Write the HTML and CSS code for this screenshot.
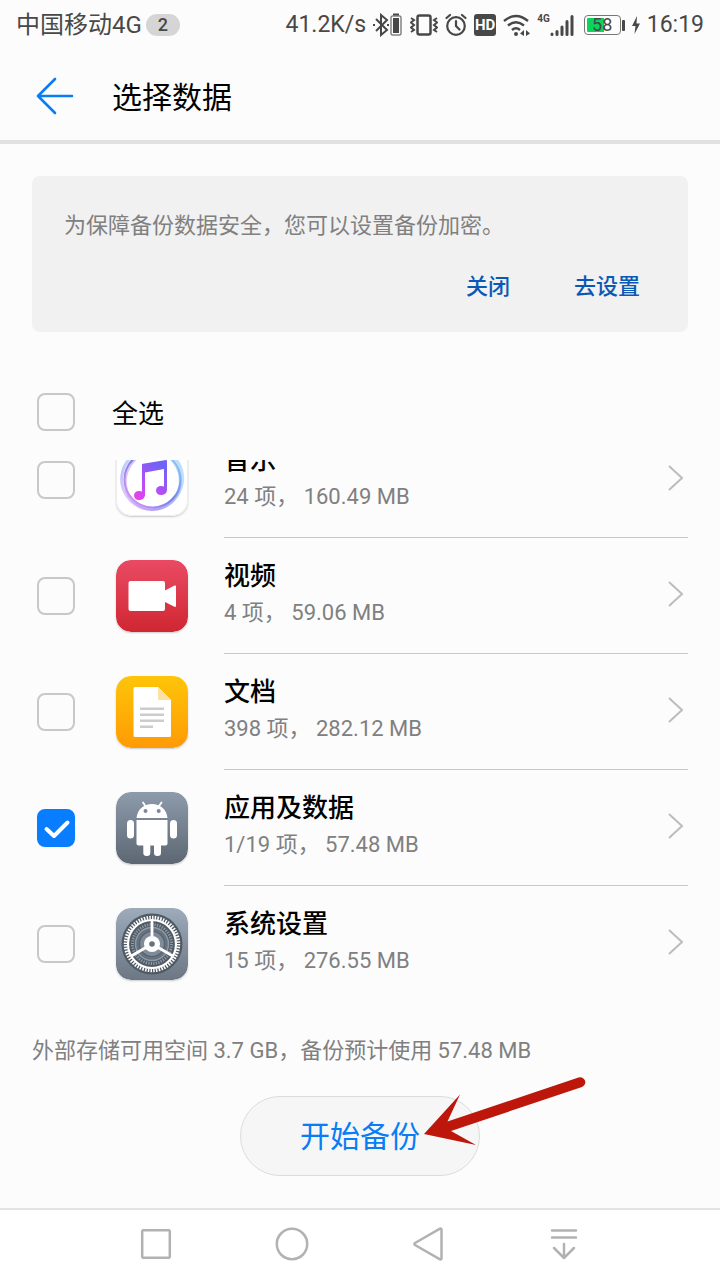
FILE: index.html
```html
<!DOCTYPE html>
<html lang="zh-CN">
<head>
<meta charset="utf-8">
<meta name="viewport" content="width=device-width, initial-scale=1">
<title>选择数据</title>
<link rel="stylesheet" href="styles.css">
</head>
<body>
<div class="screen">
  <div class="status">
    <span class="carrier">中国移动4G</span>
    <span class="badge">2</span>
    <div class="indicators">
      <span>41.2K/s</span>
      <svg width="30" height="24" viewBox="0 0 30 24" fill="none" stroke="#484848" stroke-width="2" aria-hidden="true">
        <path d="M3 6l11 11-6 5V2l6 5L3 18"/><path d="M0 12h2M14 12h2"/>
        <rect x="18" y="3" width="10" height="19" rx="1" stroke-width="1"/><path d="M20 1.500h6"/><path d="M20 5h6v15h-6z" fill="#484848" stroke="none"/>
      </svg>
      <svg width="28" height="24" viewBox="0 0 28 24" fill="none" stroke="#484848" stroke-width="2" aria-hidden="true">
        <rect x="7.500" y="2.500" width="13" height="19" rx="2" stroke-width="2.500"/>
        <path d="M1 5l3 2-3 2.500 3 2.500-3 2.500 3 2.500-3 2M27 5l-3 2 3 2.500-3 2.500 3 2.500-3 2.500 3 2"/>
      </svg>
      <svg width="22" height="24" viewBox="0 0 22 24" fill="none" stroke="#484848" stroke-width="2.200" stroke-linecap="round" aria-hidden="true">
        <circle cx="11" cy="13" r="8.800"/><path d="M11 8v5l3.500 3.500M1.500 5L5 2M20.500 5L17 2"/>
      </svg>
      <span class="hd">HD</span>
      <svg width="27" height="24" viewBox="0 0 27 24" fill="none" stroke="#484848" stroke-width="2.400" aria-hidden="true">
        <path d="M1 8Q13 -2 25 8M5 12.500Q13 6 21 12.500M9 17Q13 13.500 17 17"/>
        <circle cx="13" cy="21" r="2" fill="#484848" stroke="none"/><path d="M17 20.500l4-3.500v6zM27 20.500l-4-3.500v6z" fill="#484848" stroke="none"/>
      </svg>
      <span class="cell">
        <span class="cell-type">4G</span>
        <svg width="24" height="24" viewBox="0 0 24 24" fill="none" stroke="#484848" stroke-width="3" stroke-linecap="round" aria-hidden="true">
          <path d="M2 21v.5M7 18.500v3M12 14v7.500M17 8.500v13M22 3.500v18"/>
        </svg>
      </span>
      <span class="battery">58</span>
      <svg width="8" height="24" viewBox="0 0 8 24" fill="#484848" aria-hidden="true"><path d="M5 3L0 13h3.500L2.500 21 8 10.500H4.500z"/></svg>
      <time>16:19</time>
    </div>
  </div>

  <header class="header">
    <button class="back" type="button" aria-label="返回">
      <svg width="38" height="38" viewBox="0 0 38 38" fill="none" stroke="#087df5" stroke-width="2.600" stroke-linecap="round" stroke-linejoin="round"><path d="M36 19H2M19 2L2 19l17 17"/></svg>
    </button>
    <h1>选择数据</h1>
  </header>

  <main class="main">
    <section class="notice">
      <p>为保障备份数据安全，您可以设置备份加密。</p>
      <div class="notice-actions">
        <button type="button">关闭</button>
        <button type="button">去设置</button>
      </div>
    </section>

    <div class="all">
      <input class="check" type="checkbox" id="all">
      <label for="all">全选</label>
    </div>

    <ul class="list">
      <li class="row">
        <input class="check" type="checkbox" id="music">
        <svg class="icon" viewBox="0 0 72 72" aria-hidden="true">
          <defs>
            <linearGradient id="ring" x1="0" y1="1" x2="1" y2="0"><stop offset="0" stop-color="#e89cf5"/><stop offset=".5" stop-color="#777cf0"/><stop offset="1" stop-color="#86e0fb"/></linearGradient>
            <linearGradient id="note" x1="0" y1="1" x2=".6" y2="0"><stop offset="0" stop-color="#f23cf0"/><stop offset="1" stop-color="#6f63f7"/></linearGradient>
          </defs>
          <rect x=".5" y=".5" width="71" height="71" rx="15" fill="#fff" stroke="#ececec"/>
          <g fill="none" stroke="url(#ring)">
            <ellipse cx="35" cy="36" rx="29" ry="30" stroke-width="3" opacity=".45" transform="rotate(-35 35 36)"/>
            <ellipse cx="38" cy="36" rx="28" ry="30" stroke-width="3" opacity=".5" transform="rotate(35 38 36)"/>
            <circle cx="36.500" cy="35.500" r="28" stroke-width="2"/>
          </g>
          <path d="M26 20.500Q26 20 27 19.800L50 16q1 0 1 1v29c0 3-3 5-6 5s-5-2-5-4.500 2-4.500 5-4.500l3 .5V25L29 28.500V51c0 3-3 5-6 5s-5-2-5-4.500 2-4.500 5-4.500l3 .5z" fill="url(#note)"/>
        </svg>
        <div class="body">
          <div class="text"><label for="music">音乐</label><p>24 项， 160.49 MB</p></div>
          <button class="more" type="button" aria-label="音乐详情"><svg width="18" height="28" viewBox="0 0 18 28"><path d="M2 2l13 12L2 26"/></svg></button>
        </div>
      </li>
      <li class="row">
        <input class="check" type="checkbox" id="video">
        <svg class="icon" viewBox="0 0 72 72" aria-hidden="true">
          <defs><linearGradient id="red" x2="0" y2="1"><stop stop-color="#e94b63"/><stop offset="1" stop-color="#d02632"/></linearGradient></defs>
          <rect width="72" height="72" rx="15" fill="url(#red)"/>
          <rect x="12.500" y="21" width="36.500" height="30" rx="2" fill="#fff"/>
          <path d="M48 31l10.500-5.500Q60 25 60 26.500v19q0 2-1.500 1.300L48 41.500z" fill="#fff"/>
        </svg>
        <div class="body">
          <div class="text"><label for="video">视频</label><p>4 项， 59.06 MB</p></div>
          <button class="more" type="button" aria-label="视频详情"><svg width="18" height="28" viewBox="0 0 18 28"><path d="M2 2l13 12L2 26"/></svg></button>
        </div>
      </li>
      <li class="row">
        <input class="check" type="checkbox" id="docs">
        <svg class="icon" viewBox="0 0 72 72" aria-hidden="true">
          <defs><linearGradient id="amber" x2="0" y2="1"><stop stop-color="#fdc508"/><stop offset="1" stop-color="#ff9a06"/></linearGradient></defs>
          <rect width="72" height="72" rx="15" fill="url(#amber)"/>
          <path d="M19 11h23l13 13v35.500q0 1.500-1.500 1.500H19q-1.500 0-1.500-1.500v-47Q17.500 11 19 11z" fill="#fff"/>
          <path d="M42 11l13 13H43.500Q42 24 42 22.500z" fill="#fde0a4"/>
          <path d="M24 32.700h24M24 38.700h24M24 44.700h24M24 50.700h13" stroke="#ccc" stroke-width="2.400"/>
        </svg>
        <div class="body">
          <div class="text"><label for="docs">文档</label><p>398 项， 282.12 MB</p></div>
          <button class="more" type="button" aria-label="文档详情"><svg width="18" height="28" viewBox="0 0 18 28"><path d="M2 2l13 12L2 26"/></svg></button>
        </div>
      </li>
      <li class="row">
        <input class="check" type="checkbox" id="apps" checked>
        <svg class="icon" viewBox="0 0 72 72" aria-hidden="true">
          <defs><linearGradient id="slate" x2="0" y2="1"><stop stop-color="#8d9bab"/><stop offset="1" stop-color="#5d6773"/></linearGradient></defs>
          <rect width="72" height="72" rx="15" fill="url(#slate)"/>
          <g fill="#fff">
            <path d="M20.500 26C21.500 17 28 12 36 12s14.500 5 15.500 14z"/>
            <path d="M20.500 28h31v23.500q0 2-2 2h-27q-2 0-2-2z"/>
            <rect x="11" y="28" width="7" height="18.500" rx="3.500"/><rect x="54" y="28" width="7" height="18.500" rx="3.500"/>
            <rect x="27.300" y="46" width="7" height="18" rx="3.300"/><rect x="38" y="46" width="7" height="18" rx="3.300"/>
          </g>
          <path d="M27 10.500l3.500 5M45.500 10.500l-3.500 5" stroke="#fff" stroke-width="1.800" stroke-linecap="round"/>
          <circle cx="29.500" cy="19" r="2" fill="#7b8896"/><circle cx="42.700" cy="19" r="2" fill="#7b8896"/>
        </svg>
        <div class="body">
          <div class="text"><label for="apps">应用及数据</label><p>1/19 项， 57.48 MB</p></div>
          <button class="more" type="button" aria-label="应用及数据详情"><svg width="18" height="28" viewBox="0 0 18 28"><path d="M2 2l13 12L2 26"/></svg></button>
        </div>
      </li>
      <li class="row">
        <input class="check" type="checkbox" id="system">
        <svg class="icon" viewBox="0 0 72 72" aria-hidden="true">
          <defs><linearGradient id="steel" x2="0" y2="1"><stop stop-color="#9dabbb"/><stop offset="1" stop-color="#6c7684"/></linearGradient></defs>
          <rect width="72" height="72" rx="15" fill="url(#steel)"/>
          <circle cx="36" cy="36" r="30.500" fill="#505a64"/>
          <g fill="none">
            <circle cx="36" cy="36" r="26.500" stroke="#fff" stroke-width="3.500" pathLength="120" stroke-dasharray="1.100 .9"/>
            <circle cx="36" cy="36" r="24" stroke="#fff" stroke-width="2.200"/>
            <circle cx="36" cy="36" r="19.500" stroke="#8e9aa7" stroke-width="3" pathLength="96" stroke-dasharray="1 1"/>
            <circle cx="36" cy="36" r="16.500" fill="#67727f" stroke="#8e9aa7" stroke-width="1.500"/>
            <circle cx="36" cy="36" r="12.500" fill="#7f8b99" stroke="#55606b" stroke-width="1.200"/>
            <path d="M36 36V12M36 36l20.800 12M36 36L15.200 48" stroke="#fff" stroke-width="2.800"/>
          </g>
          <circle cx="36" cy="36" r="8" fill="#fff"/><circle cx="36" cy="36" r="2.800" fill="#67727f"/>
        </svg>
        <div class="body">
          <div class="text"><label for="system">系统设置</label><p>15 项， 276.55 MB</p></div>
          <button class="more" type="button" aria-label="系统设置详情"><svg width="18" height="28" viewBox="0 0 18 28"><path d="M2 2l13 12L2 26"/></svg></button>
        </div>
      </li>
    </ul>

    <p class="storage">外部存储可用空间 3.7 GB，备份预计使用 57.48 MB</p>
    <div class="action">
      <button class="start" type="button">开始备份</button>
      <svg class="pointer" width="162" height="70" viewBox="0 0 162 70" fill="#bd170b" aria-hidden="true"><path d="M0 58L36 18.500 23.500 45.500 154.500 1.500a5 5 0 0 1 3.500 9.500L27 55l25 14z"/></svg>
    </div>
  </main>

  <nav class="nav">
    <button type="button" aria-label="最近任务"><svg width="36" height="36" viewBox="0 0 36 36"><rect x="4.200" y="4.200" width="27.600" height="27.600" rx="1"/></svg></button>
    <button type="button" aria-label="主屏幕"><svg width="36" height="36" viewBox="0 0 36 36"><circle cx="18" cy="18" r="15.200"/></svg></button>
    <button type="button" aria-label="返回上一页"><svg width="36" height="36" viewBox="0 0 36 36"><path d="M31.500 3.500v29q-.5 1.500-1.500.8L5 19q-1.200-1 0-2L30 2.700q1-.6 1.500.8z"/></svg></button>
    <button type="button" aria-label="下拉通知"><svg width="36" height="36" viewBox="0 0 36 36"><path d="M6 4.500h24M6 11.500h24M18 18v14M8 22l10 10 10-10"/></svg></button>
  </nav>
</div>
</body>
</html>
```
FILE: styles.css
```css
* { box-sizing: border-box; }
body, h1, p, ul { margin: 0; padding: 0; }
body {
  background: #fcfcfc;
  color: #000;
  font-family: Roboto, "Noto Sans CJK SC", sans-serif;
}
button {
  margin: 0;
  padding: 0;
  border: 0;
  background: none;
  font: inherit;
  color: inherit;
  cursor: pointer;
}
svg { display: block; flex: none; }

.screen { display: flex; flex-direction: column; height: 100vh; }

.status {
  display: flex;
  align-items: center;
  height: 50px;
  padding: 0 16px;
  font-size: 24px;
  line-height: 32px;
  color: #484848;
}
.badge {
  width: 34px;
  margin-left: 4px;
  border-radius: 12px;
  background: #d5d5d5;
  font-size: 18px;
  font-weight: 500;
  line-height: 22px;
  text-align: center;
}
.indicators { display: flex; align-items: center; gap: 7px; margin-left: auto; font-size: 23px; }
.hd {
  width: 22px;
  border-radius: 3px;
  background: #484848;
  color: #fff;
  font-size: 15px;
  font-weight: 700;
  line-height: 22px;
  text-align: center;
}
.cell { display: flex; align-items: flex-start; }
.cell-type { font-size: 10px; font-weight: 700; line-height: 12px; }
.battery {
  position: relative;
  width: 37px;
  margin: 0 4px 0 3px;
  border: 1px solid #777;
  border-radius: 4px;
  background: linear-gradient(90deg, #0bd35c 54%, #fff 54%) content-box;
  padding: 2px;
  font-size: 18px;
  line-height: 14px;
  text-align: center;
}
.battery::after {
  content: "";
  position: absolute;
  right: -5px;
  top: 4px;
  width: 3px;
  height: 11px;
  border-radius: 1px;
  background: #484848;
}

.header {
  display: flex;
  align-items: center;
  gap: 38px;
  height: 94px;
  padding: 2px 36px 0;
  border-bottom: 4px solid #e1e1e1;
}
.header h1 { padding-top: 4px; font-size: 30px; font-weight: 400; line-height: 44px; }

.main { display: flex; flex: 1; flex-direction: column; min-height: 0; padding: 32px; }
.notice {
  padding: 34px 48px 28px 32px;
  border-radius: 8px;
  background: #f1f1f1;
  font-size: 22px;
  line-height: 32px;
  color: #808080;
}
.notice-actions {
  display: flex;
  justify-content: flex-end;
  gap: 64px;
  margin-top: 28px;
  color: #0a59b5;
  font-weight: 500;
}
.notice-actions button { height: 34px; line-height: 32px; }

.all {
  display: flex;
  align-items: center;
  gap: 37px;
  height: 96px;
  margin-top: 32px;
  padding-left: 5px;
  font-size: 26px;
  line-height: 36px;
}
.all label { padding-top: 4px; }
.check {
  flex: none;
  appearance: none;
  width: 38px;
  height: 38px;
  margin: 0;
  border: 2px solid #c8c8c8;
  border-radius: 8px;
  background: #fcfcfc;
}
.check:checked {
  border-color: #087dff;
  background: #087dff url("data:image/svg+xml,%3Csvg xmlns='http://www.w3.org/2000/svg' viewBox='0 0 34 34' fill='none' stroke='white' stroke-width='4' stroke-linecap='round' stroke-linejoin='round'%3E%3Cpath d='M7.500 18l7.500 7 13.500-13.500'/%3E%3C/svg%3E") center / 100%;
}

.list {
  display: flex;
  flex: 1;
  flex-direction: column;
  justify-content: flex-end;
  min-height: 0;
  overflow: hidden;
  list-style: none;
}
.row { display: flex; flex: none; align-items: center; height: 116px; padding-left: 5px; }
.icon {
  width: 72px;
  height: 72px;
  margin: 0 36px 0 41px;
  border-radius: 15px;
  box-shadow: 0 1px 2px #0003;
}
.body {
  display: flex;
  flex: 1;
  align-items: center;
  align-self: stretch;
  justify-content: space-between;
  padding: 0 3px 4px 0;
  border-bottom: 1px solid #c9c9c9;
}
.row:last-child .body { border-bottom-color: transparent; }
.text { padding-bottom: 2px; }
.text label { display: block; font-size: 26px; font-weight: 500; line-height: 40px; }
.text p { font-size: 22px; line-height: 34px; color: #808080; }
.more svg { fill: none; stroke: #bcbcbc; stroke-width: 2; }

.storage { margin: 33px 0 29px; font-size: 22px; line-height: 32px; color: #808080; }
.action { position: relative; align-self: center; }
.start {
  display: block;
  width: 240px;
  height: 80px;
  padding-bottom: 4px;
  border: 1px solid #dcdcdc;
  border-radius: 40px;
  background: #f6f6f6;
  color: #087df5;
  font-size: 30px;
}
.pointer { position: absolute; left: 184px; top: -20px; pointer-events: none; }

.nav {
  display: flex;
  justify-content: space-between;
  height: 72px;
  padding: 0 138px 2px;
  border-top: 2px solid #e3e3e3;
  background: #fff;
}
.nav svg { fill: none; stroke: #b2b2b2; stroke-width: 2.500px; stroke-linecap: round; stroke-linejoin: round; }
```
